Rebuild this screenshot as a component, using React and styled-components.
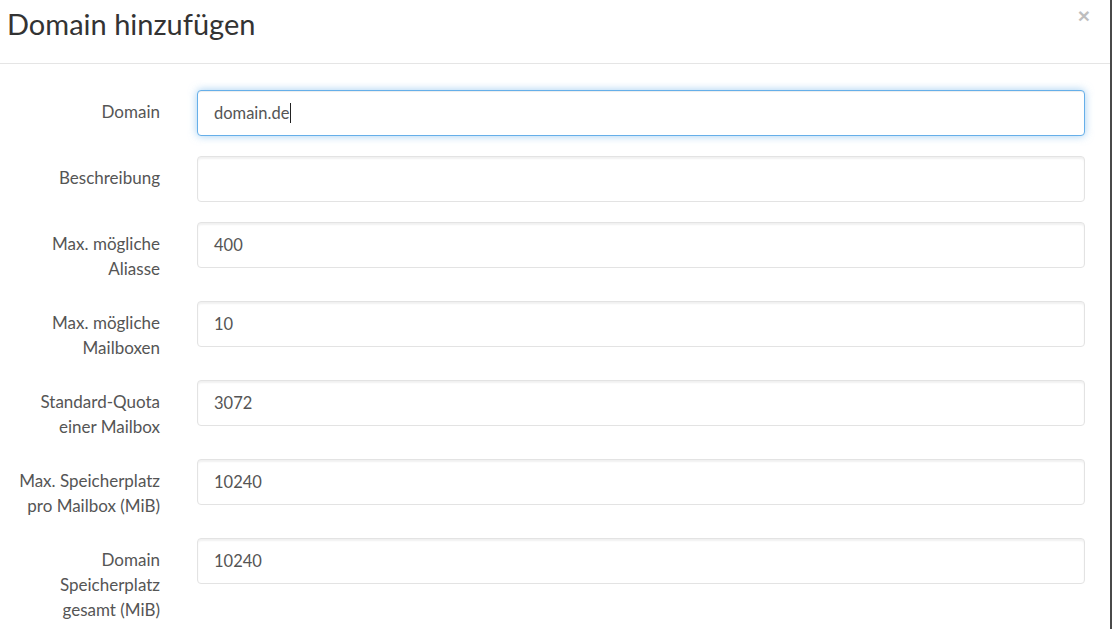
import React from "react";
import styled, { createGlobalStyle } from "styled-components";

const GlobalStyle = createGlobalStyle`
  html, body {
    margin: 0;
    padding: 0;
    height: 100%;
    background: #4a4a4a;
  }
  body {
    font-family: Lato, "Open Sans", sans-serif;
    color: #555;
    overflow: hidden;
  }
`;

const Backdrop = styled.div`
  display: flex;
  height: 629px;
  width: 1112px;
`;

const Modal = styled.div`
  width: 1110px;
  height: 100%;
  background: #fff;
  display: flex;
  flex-direction: column;
  overflow: hidden;
`;

const Header = styled.header`
  flex-shrink: 0;
  display: flex;
  align-items: flex-start;
  justify-content: space-between;
  height: 64px;
  box-sizing: border-box;
  padding: 5px 20px 0 7px;
  border-bottom: 1px solid #e5e5e5;
`;

const Title = styled.h4`
  margin: 0;
  font-size: 29px;
  font-weight: 400;
  line-height: 38px;
  color: #333;
`;

const Close = styled.button`
  border: 0;
  background: none;
  padding: 0;
  margin-top: -3px;
  font-family: "Liberation Sans", Arial, sans-serif;
  font-size: 21px;
  font-weight: 700;
  line-height: 28px;
  color: #000;
  opacity: 0.25;
  cursor: pointer;
`;

const Body = styled.form`
  flex-shrink: 0;
  padding: 26px 25px 0 0;
  display: flex;
  flex-direction: column;
`;

const Row = styled.div`
  display: grid;
  grid-template-columns: 160px 1fr;
  column-gap: 37px;
  align-items: start;
  margin-bottom: 20px;
`;

const Label = styled.label`
  text-align: right;
  font-size: 17px;
  line-height: 25px;
  padding-top: 9px;
  color: #555;
`;

const Field = styled.div`
  height: 46px;
  box-sizing: border-box;
  display: flex;
  align-items: center;
  padding: 0 16px;
  font-size: 16.5px;
  color: #555;
  background: #fff;
  border-radius: 4px;
  border: 1px solid ${(p) => (p.$focus ? "#66afe9" : "#e3e3e3")};
  box-shadow: ${(p) =>
    p.$focus
      ? "inset 0 1px 1px rgba(0,0,0,.075), 0 0 8px rgba(102,175,233,.6)"
      : "inset 0 2px 2px rgba(0,0,0,.06)"};
`;

const Caret = styled.span`
  display: inline-block;
  width: 1px;
  height: 20px;
  background: #222;
  margin-left: 1px;
`;

const fields = [
  { label: ["Domain"], value: "domain.de", focus: true },
  { label: ["Beschreibung"], value: "" },
  { label: ["Max. mögliche", "Aliasse"], value: "400" },
  { label: ["Max. mögliche", "Mailboxen"], value: "10" },
  { label: ["Standard-Quota", "einer Mailbox"], value: "3072" },
  { label: ["Max. Speicherplatz", "pro Mailbox (MiB)"], value: "10240" },
  { label: ["Domain", "Speicherplatz", "gesamt (MiB)"], value: "10240" },
];

const App = () => {
  return (
    <>
      <GlobalStyle />
      <Backdrop>
        <Modal>
          <Header>
            <Title>Domain hinzufügen</Title>
            <Close type="button">×</Close>
          </Header>
          <Body>
            {fields.map((f, i) => (
              <Row key={i}>
                <Label>
                  {f.label.map((line, j) => (
                    <div key={j}>{line}</div>
                  ))}
                </Label>
                <Field $focus={f.focus}>
                  {f.value}
                  {f.focus && <Caret />}
                </Field>
              </Row>
            ))}
          </Body>
        </Modal>
      </Backdrop>
    </>
  );
};
export default App;
